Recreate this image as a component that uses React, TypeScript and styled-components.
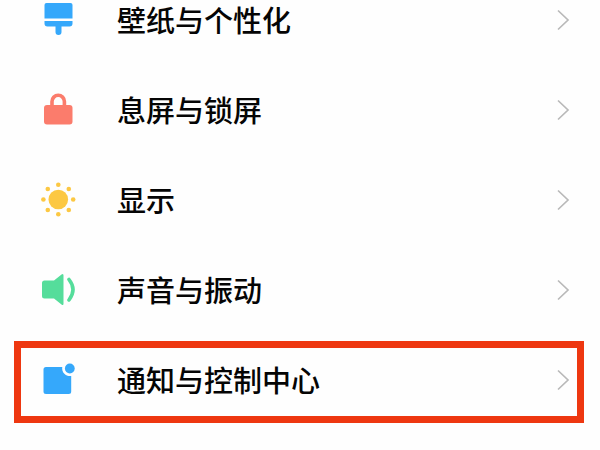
import React from "react";
import styled, { createGlobalStyle } from "styled-components";

const GlobalStyle = createGlobalStyle`
  *, *::before, *::after { box-sizing: border-box; }
  body {
    margin: 0;
    background: #fefefe;
    overflow: hidden;
    font-family: "Noto Sans CJK SC", sans-serif;
  }
`;

/* The list is scrolled so that its first row is partly above the window. */
const SettingsList = styled.ul`
  list-style: none;
  margin: -25px 0 0;
  padding: 0;
  display: flex;
  flex-direction: column;
`;

const Item = styled.li<{ $highlighted?: boolean }>`
  position: relative;

  &::after {
    content: "";
    display: ${(p) => (p.$highlighted ? "block" : "none")};
    position: absolute;
    inset: 6px 16px 2px 14px;
    border: 7px solid #ee3710;
    pointer-events: none;
  }
`;

const RowLink = styled.a`
  display: flex;
  align-items: center;
  min-height: 90px;
  padding: 0 28px 0 40px;
  color: #050505;
  text-decoration: none;
`;

const RowIcon = styled.svg`
  flex: none;
  width: 36px;
  height: 36px;
  margin-right: 41px;
`;

const Label = styled.span`
  flex: 1;
  padding-bottom: 2px;
  font-size: 29px;
  line-height: 40px;
  font-weight: 500;
`;

const Chevron = styled.svg`
  flex: none;
  width: 16px;
  height: 24px;
`;

const BrushIcon = () => (
  <RowIcon viewBox="0 0 36 36" fill="#35a8fb" aria-hidden="true">
    <path d="M6.5 1h24a2 2 0 0 1 2 2v13.5h-28V3a2 2 0 0 1 2-2z" />
    <path d="M4.5 19h28v2.500a3 3 0 0 1-3 3h-8V30a3 3 0 0 1-6 0v-5.500h-8a3 3 0 0 1-3-3z" />
  </RowIcon>
);

const LockIcon = () => (
  <RowIcon viewBox="0 0 36 36" aria-hidden="true">
    <path d="M12 15V9.500a6.200 6.200 0 0 1 12.400 0V15" fill="none" stroke="#fb7c6c" strokeWidth="3.600" />
    <rect x="4" y="13" width="28.500" height="19.500" rx="3" fill="#fb7c6c" />
  </RowIcon>
);

const SUN_RAYS = [
  [18.3, 2.7], [28.8, 7], [33.2, 17.5], [28.8, 28],
  [18.3, 32.3], [7.8, 28], [3.4, 17.5], [7.8, 7],
];

const SunIcon = () => (
  <RowIcon viewBox="0 0 36 36" fill="#fcc843" aria-hidden="true">
    <circle cx="18.300" cy="17.500" r="9.800" />
    {SUN_RAYS.map(([x, y]) => (
      <circle key={`${x}-${y}`} cx={x} cy={y} r="2.300" />
    ))}
  </RowIcon>
);

const SpeakerIcon = () => (
  <RowIcon viewBox="0 0 36 36" fill="#55dd9b" aria-hidden="true">
    <path d="M4.500 8.500H14L21.500 2.500Q23.500 1 23.500 3.500V31.500Q23.500 34 21.500 32.500L14 26.500H4.500Q2 26.500 2 24V11Q2 8.500 4.500 8.500z" />
    <path d="M29 7.500Q37 17.500 29 28" fill="none" stroke="#55dd9b" strokeWidth="3.600" strokeLinecap="round" />
  </RowIcon>
);

const NotificationIcon = () => (
  <RowIcon viewBox="0 0 36 36" fill="#35a8fb" aria-hidden="true">
    <path d="M6 5H22.300A7.600 7.600 0 0 0 31.200 13.900V29.500a2.500 2.500 0 0 1-2.500 2.500H6a2.500 2.500 0 0 1-2.500-2.500V7.500A2.500 2.500 0 0 1 6 5z" />
    <circle cx="29.800" cy="6.500" r="4.900" />
  </RowIcon>
);

const ITEMS = [
  { id: "wallpaper", label: "壁纸与个性化", Icon: BrushIcon },
  { id: "lock-screen", label: "息屏与锁屏", Icon: LockIcon },
  { id: "display", label: "显示", Icon: SunIcon },
  { id: "sound", label: "声音与振动", Icon: SpeakerIcon },
  { id: "notifications", label: "通知与控制中心", Icon: NotificationIcon, highlighted: true },
];

export default function App() {
  return (
    <>
      <GlobalStyle />
      <nav>
        <SettingsList>
          {ITEMS.map(({ id, label, Icon, highlighted }) => (
            <Item key={id} $highlighted={highlighted}>
              <RowLink href={`#${id}`}>
                <Icon />
                <Label>{label}</Label>
                <Chevron viewBox="0 0 16 24" fill="none" stroke="#b9b9b9" strokeWidth="1.700" aria-hidden="true">
                  <path d="M2 2.500L12 12L2 21.500" />
                </Chevron>
              </RowLink>
            </Item>
          ))}
        </SettingsList>
      </nav>
    </>
  );
}
